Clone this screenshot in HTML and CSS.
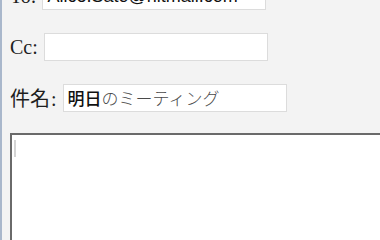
FILE: index.html
```html
<!DOCTYPE html>
<html lang="ja">
<head>
<meta charset="utf-8">
<link rel="stylesheet" href="styles.css">
</head>
<body>
<div class="page">
  <div class="fields">
    <div class="row">
      <span class="label">To:</span>
      <div class="field">Alice.Sato@hitmail.com</div>
    </div>
    <div class="row">
      <span class="label">Cc:</span>
      <div class="field"></div>
    </div>
    <div class="row">
      <span class="label"><span class="cjk">件名</span>:</span>
      <div class="field jp"><span class="strong">明日</span><span class="light">のミーティング</span></div>
    </div>
  </div>
  <div class="editor"><span class="caret"></span></div>
</div>
</body>
</html>
```
FILE: styles.css
```css
html, body {
  margin: 0;
  height: 100%;
  overflow: hidden;
}
body {
  background: #f3f3f3;
  border-left: 2px solid #a9b7cb;
  box-sizing: border-box;
}
.page {
  padding-left: 8px;
}
.fields {
  margin-top: -18px;
  display: flex;
  flex-direction: column;
  gap: 23px;
}
.row {
  display: flex;
  align-items: center;
  gap: 6px;
  height: 28px;
}
.label {
  font-family: "Liberation Serif", serif;
  font-size: 20px;
  color: #1e1e1e;
  line-height: 28px;
  white-space: nowrap;
}
.cjk {
  font-family: "Noto Sans CJK JP", sans-serif;
  margin-right: 1px;
}
.field {
  box-sizing: border-box;
  width: 224px;
  height: 28px;
  background: #fff;
  border: 1px solid #dcdcdc;
  padding: 0 4px;
  font-family: "Liberation Sans", Arial, sans-serif;
  font-size: 18px;
  line-height: 27px;
  color: #111;
  white-space: nowrap;
  overflow: hidden;
}
.field.jp {
  font-family: "Noto Sans CJK JP", sans-serif;
  font-size: 17px;
  line-height: 26px;
}
.strong {
  color: #111;
  font-weight: 500;
}
.light {
  color: #4a4a4a;
  font-weight: 300;
}
.editor {
  margin-top: 21px;
  width: 420px;
  height: 120px;
  background: #fff;
  border-top: 2px solid #6a6a6a;
  border-left: 2px solid #6a6a6a;
  padding: 5px 2px;
  box-sizing: border-box;
}
.caret {
  display: block;
  width: 2px;
  height: 17px;
  background: #d4d4d4;
}
```
